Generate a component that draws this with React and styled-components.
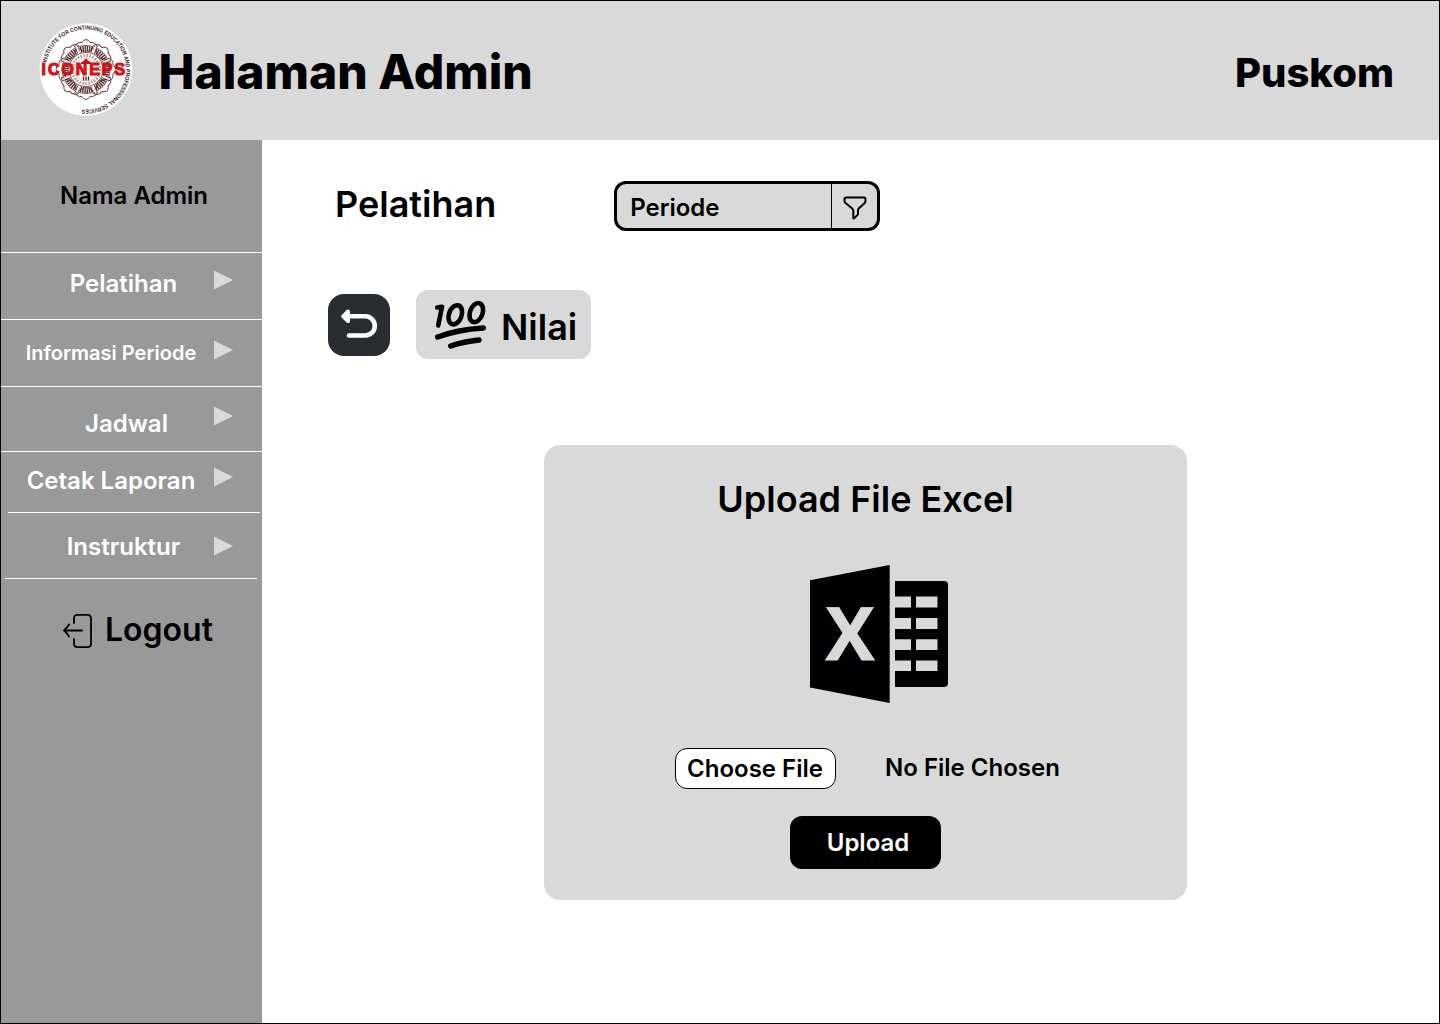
import React from "react";
import styled, { createGlobalStyle } from "styled-components";

const GlobalStyle = createGlobalStyle`
  * { box-sizing: border-box; }
  body { margin: 0; background: #fff; }
`;

const Frame = styled.div`
  width: 1440px;
  height: 1024px;
  border: 1px solid #000;
  display: flex;
  flex-direction: column;
  overflow: hidden;
  background: #fff;
  color: #000;
  font-family: Inter, "Liberation Sans", sans-serif;
  font-weight: 600;
`;

const Header = styled.header`
  height: 139px;
  flex: none;
  display: flex;
  align-items: center;
  background: #d9d9d9;
  padding: 0 45px 0 38px;
`;

const LogoSvg = styled.svg`
  width: 94px;
  height: 94px;
  flex: none;
  margin-bottom: 2px;
  overflow: visible;
`;

const PageTitle = styled.h1`
  margin: 2px 0 0 25.5px;
  flex: 1;
  font-size: 48px;
  font-weight: 800;
  line-height: 58px;
  white-space: nowrap;
`;

const Unit = styled.div`
  margin-top: 5px;
  font-size: 40px;
  font-weight: 800;
  line-height: 48px;
`;

const Body = styled.div`
  flex: 1;
  display: flex;
`;

const Sidebar = styled.nav`
  width: 261px;
  flex: none;
  background: #999;
  display: flex;
  flex-direction: column;
`;

const AdminName = styled.div`
  height: 113px;
  border-bottom: 1px solid #fff;
  padding: 41px 0 0 5px;
  font-size: 24px;
  line-height: 29px;
  text-align: center;
`;

const MenuItem = styled.a`
  height: ${(p) => p.$height}px;
  margin: 0 ${(p) => p.$right || 0}px 0 ${(p) => p.$left || 0}px;
  border-bottom: 1px solid #fff;
  display: flex;
  align-items: flex-start;
  color: #fff;
`;

const MenuLabel = styled.span`
  width: ${(p) => p.$width}px;
  padding-top: ${(p) => p.$top}px;
  flex: none;
  font-size: ${(p) => p.$size || 24}px;
  line-height: 30px;
  text-align: center;
  white-space: nowrap;
`;

const ArrowSlot = styled.span`
  display: flex;
  flex: 1;
  margin-left: -60px;
`;

const ArrowIcon = styled.svg`
  width: 19px;
  height: 20px;
  flex: none;
  margin: ${(p) => p.$top}px ${(p) => p.$right}px 0 auto;
  fill: #d9d9d9;
`;

const Logout = styled.a`
  display: flex;
  align-items: center;
  gap: 12px;
  padding: 31px 0 0 61px;
  font-size: 32px;
  line-height: 40px;

  svg {
    margin-top: 1px;
  }
`;

const Content = styled.main`
  flex: 1;
  display: flex;
  flex-direction: column;
  align-items: flex-start;
  padding: 41px 0 0 66px;
`;

const TitleRow = styled.div`
  display: flex;
  gap: 118px;
  align-items: flex-start;
  padding-left: 7px;
`;

const SectionTitle = styled.h2`
  margin: ${(p) => p.$top || 0}px 0 0;
  font-size: 36px;
  font-weight: 600;
  line-height: 44px;
`;

const PeriodSelect = styled.div`
  width: 266px;
  height: 50px;
  border: 3px solid #000;
  border-radius: 12px;
  background: #d9d9d9;
  display: flex;
  align-items: stretch;
  font-size: 24px;
`;

const PeriodLabel = styled.span`
  flex: 1;
  padding: 3px 0 0 13px;
  line-height: 42px;
`;

const FilterCell = styled.span`
  width: 46px;
  border-left: 1px solid #000;
  display: flex;
  align-items: center;
  justify-content: center;
  padding: 3px 0 0 1px;
`;

const ActionRow = styled.div`
  display: flex;
  gap: 26px;
  margin-top: 59px;
`;

const BackButton = styled.button`
  width: 62px;
  height: 62px;
  margin: 4px 0 0;
  padding: 0;
  border: 0;
  border-radius: 16px;
  background: #292d32;
  display: grid;
`;

const ScoreBadge = styled.div`
  width: 175px;
  height: 69px;
  border-radius: 12px;
  background: #d9d9d9;
  display: flex;
  align-items: center;
  gap: 9px;
  padding-left: 12px;
  font-size: 36px;
`;

const ScoreLabel = styled.span`
  padding-top: 4px;
  line-height: 44px;
`;

const UploadCard = styled.section`
  width: 643px;
  height: 455px;
  margin: 86px 0 0 216px;
  border-radius: 16px;
  background: #d9d9d9;
  display: flex;
  flex-direction: column;
  align-items: center;
`;

const ExcelSvg = styled.svg`
  width: 140px;
  height: 140px;
  margin: 43px 0 0 27px;
`;

const FileRow = styled.div`
  align-self: stretch;
  display: flex;
  align-items: center;
  gap: 49px;
  margin-top: 44px;
  padding-left: 131px;
  font-size: 24px;
  line-height: 29px;
`;

const ChooseButton = styled.button`
  width: 161px;
  height: 41px;
  padding: 0 1px 0 0;
  border: 1px solid #000;
  border-radius: 12px;
  background: #fff;
  color: #000;
  font: inherit;
  white-space: nowrap;
`;

const FileStatus = styled.span`
  padding-bottom: 2px;
`;

const UploadButton = styled.button`
  width: 151px;
  height: 53px;
  margin-top: 27px;
  padding: 0 0 0 5px;
  border: 0;
  border-radius: 12px;
  background: #000;
  color: #fff;
  font: inherit;
  font-size: 24px;
`;

const range = (count) => Array.from({ length: count }, (_, i) => (i * 360) / count);

function Logo() {
  return (
    <LogoSvg viewBox="0 0 94 94">
      <defs>
        <path id="ring" d="M 7.600 39.500 A 40 40 0 1 1 26.700 81.100" />
      </defs>
      <circle cx="47" cy="46.500" r="46.300" fill="#fff" />
      <g fill="none" stroke="#70403f" strokeWidth="1">
        {range(8).map((a) => (
          <path key={a} d="M35.500 24Q37 19 43 19.500Q44 17 47 16.500Q50 17 51 19.500Q57 19 58.500 24Q53 25 47 30Q41 25 35.500 24Z" transform={`rotate(${a} 47 46.500)`} />
        ))}
      </g>
      <circle cx="47" cy="46.500" r="20.500" fill="none" stroke="#4a2828" strokeWidth="6" strokeDasharray="1.300 0.850" />
      <circle cx="47" cy="46.500" r="24" fill="none" stroke="#7b4543" strokeWidth="0.900" />
      <g stroke="#fff" strokeWidth="2">
        {range(8).map((a) => (
          <path key={a} d="M47 22V31" transform={`rotate(${a + 22.5} 47 46.500)`} />
        ))}
      </g>
      <circle cx="47" cy="46.500" r="17" fill="#fff" stroke="#8a4a48" strokeWidth="0.900" />
      <circle cx="47" cy="46.500" r="14" fill="none" stroke="#b08f8c" strokeWidth="2.800" strokeDasharray="1.500 1.500" />
      <circle cx="47" cy="46.500" r="11.500" fill="#fff" stroke="#c9a5a3" strokeWidth="0.500" />
      <path d="M41 41Q43 38 45 37.500L47 35 49 37.500Q51 38 53 41Z" fill="#c31616" />
      <path d="M44.500 53.500v4M47 53.500v4M49.500 53.500v4" stroke="#4b2020" strokeWidth="1.300" />
      <text
        x="2.500"
        y="52"
        textLength="83.500"
        fontFamily="Liberation Sans, sans-serif"
        fontWeight="700"
        fontSize="15.800"
        fill="#e01015"
        stroke="#d01015"
        strokeWidth="1.100"
      >
        ICONEPS
      </text>
      <text fontFamily="Liberation Sans, sans-serif" fontWeight="700" fontSize="5.900" fill="#42201f">
        <textPath href="#ring" textLength="185" lengthAdjust="spacingAndGlyphs">
          INSTITUTE FOR CONTINUING EDUCATION AND PROFESSIONAL SERVICES
        </textPath>
      </text>
    </LogoSvg>
  );
}

function Arrow({ top, right }) {
  return (
    <ArrowIcon viewBox="0 0 19 20" $top={top} $right={right}>
      <path d="M0 0.500 19 10 0 19.500Z" />
    </ArrowIcon>
  );
}

function LogoutIcon() {
  return (
    <svg width="31" height="36" viewBox="0 0 31 36" fill="none" stroke="#000" strokeWidth="1.800" strokeLinecap="round" strokeLinejoin="round">
      <path d="M12 10V5.500Q12 1.800 15.700 1.800H25.300Q29 1.800 29 5.500V30.500Q29 34.200 25.300 34.200H15.700Q12 34.200 12 30.500V26" />
      <path d="M20 17.500H2M7 11.500Q5 15 2 17.500Q5 20 7 23.500" />
    </svg>
  );
}

function FilterIcon() {
  return (
    <svg width="24" height="24" viewBox="0 0 24 24" fill="none" stroke="#000" strokeWidth="2" strokeLinecap="round" strokeLinejoin="round">
      <path d="M3 1.500H21Q22.500 1.500 22.500 3V5Q22.500 6.300 21.500 7.200L15.700 12.500Q15 13.200 15 14.500V17.500Q15 18.700 14.100 19.400L11.200 22.300Q10.300 23 10.300 21.800V15Q10.300 13.800 9.500 12.800L2.600 7.100Q1.500 6.100 1.500 5V3Q1.500 1.500 3 1.500Z" />
    </svg>
  );
}

function BackIcon() {
  return (
    <svg width="62" height="62" viewBox="0 0 62 62" fill="none" stroke="#fff" strokeWidth="4.600" strokeLinecap="round" strokeLinejoin="round">
      <path d="M21 41.500H37.200A9.600 9.600 0 0 0 37.200 22.300H17" />
      <path d="M20 17.500 15.200 22.300 20 27Z" fill="#fff" strokeWidth="4" />
    </svg>
  );
}

function HundredIcon() {
  return (
    <svg width="64" height="60" viewBox="0 0 64 60" fill="none" stroke="#000" strokeWidth="4.600" strokeLinecap="round" strokeLinejoin="round">
      <path d="M9.300 12.500 14 11.700 10.200 30.500" />
      <ellipse cx="27.300" cy="19.800" rx="6.300" ry="9.900" transform="rotate(20 27.300 19.800)" />
      <ellipse cx="48.300" cy="17.600" rx="6.300" ry="9.900" transform="rotate(20 48.300 17.600)" />
      <path d="M9.700 42Q30 34.500 55.300 33" strokeWidth="5.400" />
      <path d="M22.700 51Q36 46.500 51 45" strokeWidth="5.400" />
    </svg>
  );
}

function ExcelIcon() {
  return (
    <ExcelSvg viewBox="0 0 140 140" fill="#020003">
      <path d="M1 16.300 80.700 1V139L1 123.500Z" />
      <path
        fillRule="evenodd"
        d="M86 17H135Q139 17 139 21V119Q139 123 135 123H86V107H102V96.500H86V86H102V75.200H86V65H102V54H86V43.500H102V32.500H86ZM107 32.500V43.500H128.500V32.500ZM107 54V65H128.500V54ZM107 75.200V86H128.500V75.200ZM107 96.500V107H128.500V96.500Z"
      />
      <text
        x="16.500"
        y="96"
        textLength="49"
        lengthAdjust="spacingAndGlyphs"
        fontFamily="Open Sans, sans-serif"
        fontWeight="700"
        fontSize="74"
        fill="#d9d9d9"
        stroke="#d9d9d9"
        strokeWidth="0.800"
      >
        X
      </text>
    </ExcelSvg>
  );
}

const menu = [
  { label: "Pelatihan", height: 67, width: 245, top: 15.5, arrow: 17 },
  { label: "Informasi Periode", height: 67, width: 220, top: 18, arrow: 20, size: 20 },
  { label: "Jadwal", height: 65, width: 251, top: 21.5, arrow: 19 },
  { label: "Cetak Laporan", height: 61, width: 206, top: 13.5, arrow: 15, left: 7, right: 2 },
  { label: "Instruktur", height: 66, width: 237, top: 18.5, arrow: 23, left: 4, right: 5 },
];

export default function App() {
  return (
    <Frame>
      <GlobalStyle />
      <Header>
        <Logo />
        <PageTitle>Halaman Admin</PageTitle>
        <Unit>Puskom</Unit>
      </Header>
      <Body>
        <Sidebar>
          <AdminName>Nama Admin</AdminName>
          {menu.map((m) => (
            <MenuItem key={m.label} $height={m.height} $left={m.left} $right={m.right}>
              <MenuLabel $width={m.width} $top={m.top} $size={m.size}>
                {m.label}
              </MenuLabel>
              <ArrowSlot>
                <Arrow top={m.arrow} right={29 - (m.right || 0)} />
              </ArrowSlot>
            </MenuItem>
          ))}
          <Logout>
            <LogoutIcon />
            Logout
          </Logout>
        </Sidebar>
        <Content>
          <TitleRow>
            <SectionTitle $top={1}>Pelatihan</SectionTitle>
            <PeriodSelect>
              <PeriodLabel>Periode</PeriodLabel>
              <FilterCell>
                <FilterIcon />
              </FilterCell>
            </PeriodSelect>
          </TitleRow>
          <ActionRow>
            <BackButton aria-label="Kembali">
              <BackIcon />
            </BackButton>
            <ScoreBadge>
              <HundredIcon />
              <ScoreLabel>Nilai</ScoreLabel>
            </ScoreBadge>
          </ActionRow>
          <UploadCard>
            <SectionTitle $top={32}>Upload File Excel</SectionTitle>
            <ExcelIcon />
            <FileRow>
              <ChooseButton>Choose File</ChooseButton>
              <FileStatus>No File Chosen</FileStatus>
            </FileRow>
            <UploadButton>Upload</UploadButton>
          </UploadCard>
        </Content>
      </Body>
    </Frame>
  );
}
